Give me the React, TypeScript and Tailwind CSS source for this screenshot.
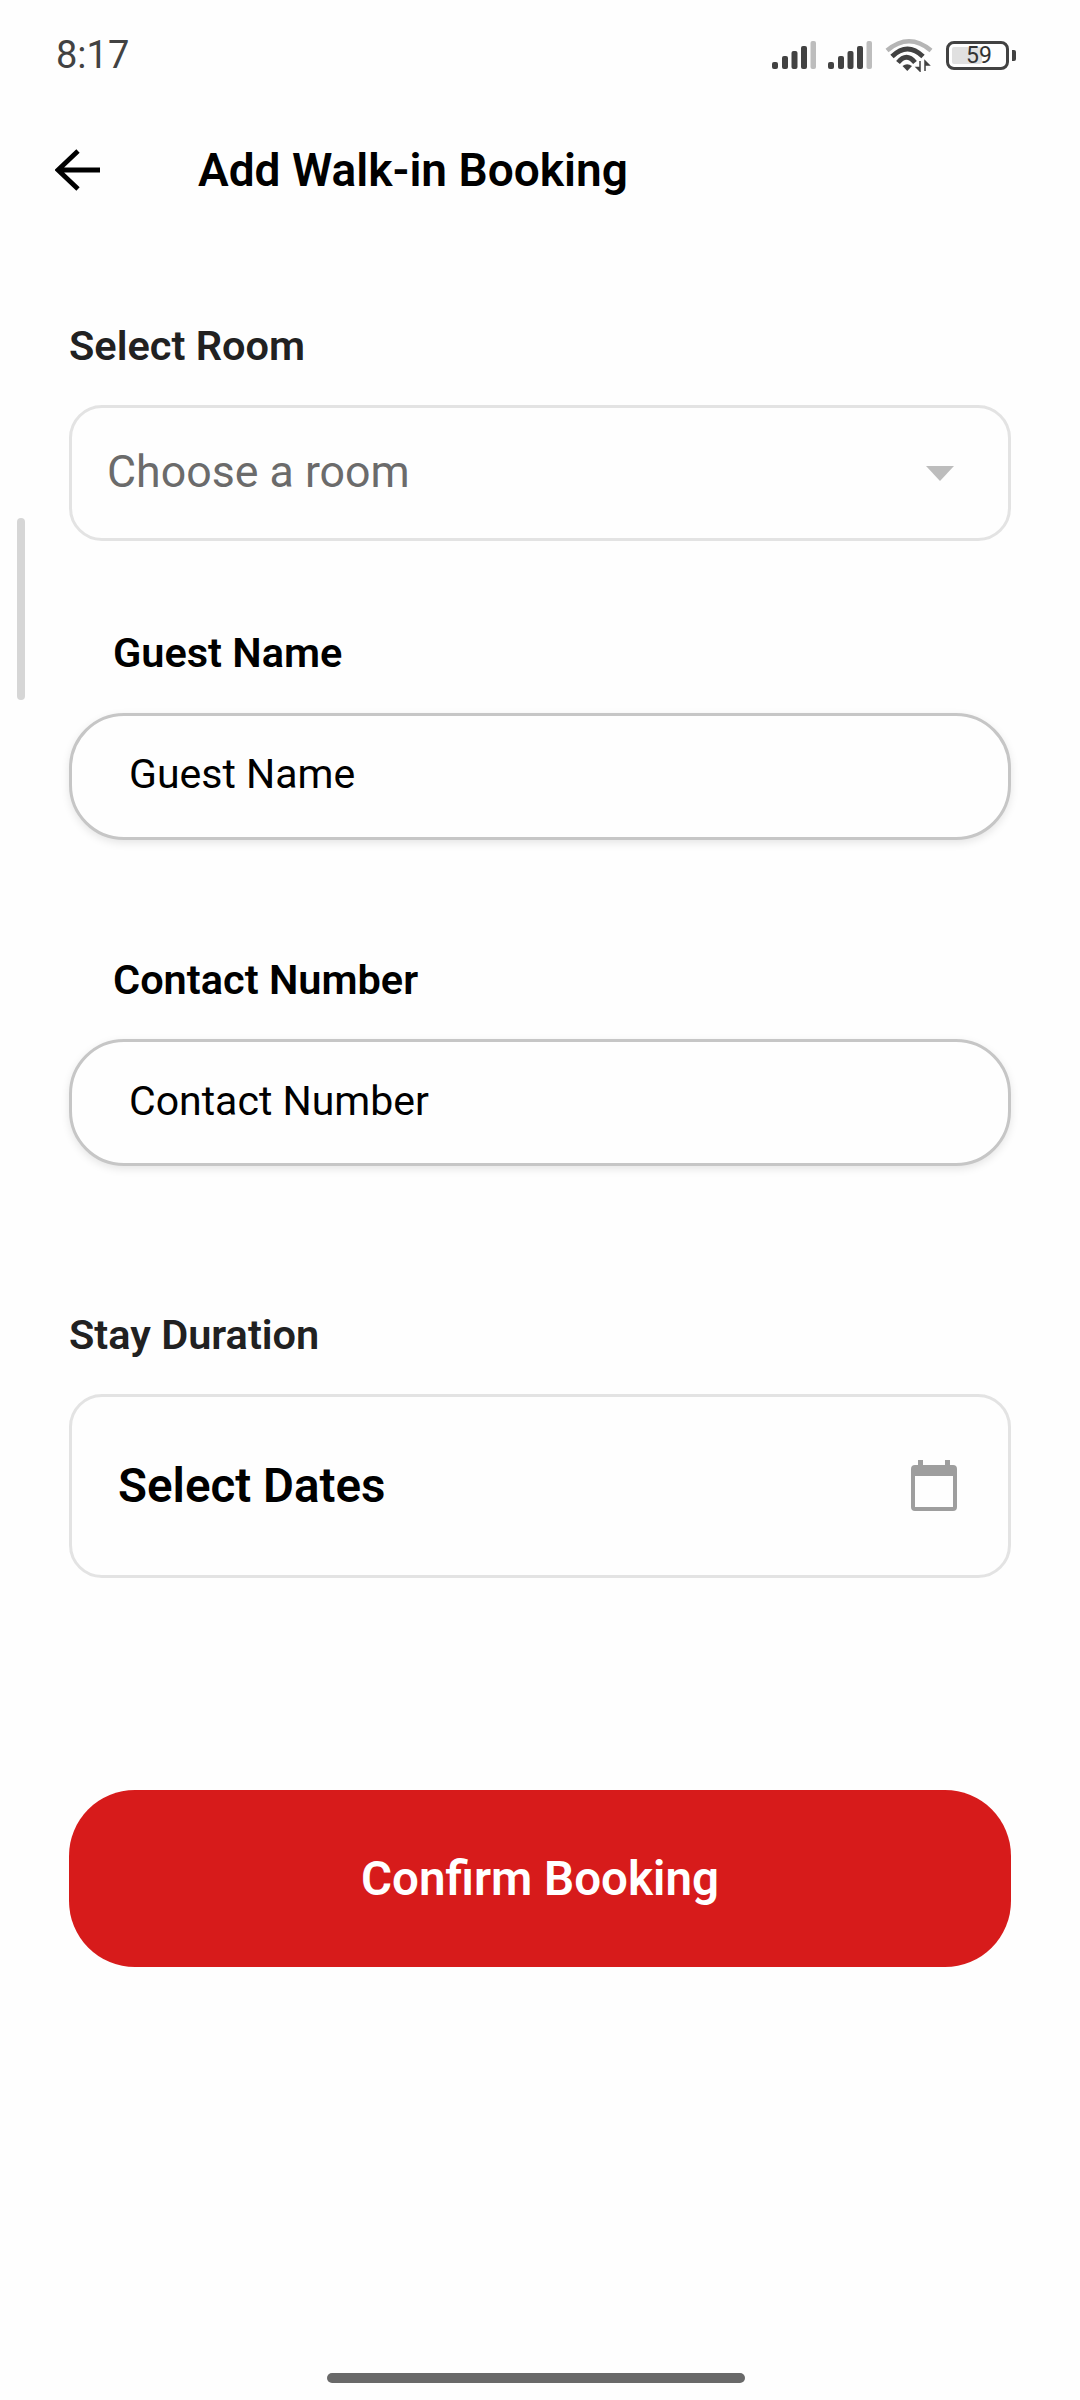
import React from "react";

function Signal() {
  return (
    <svg width="45" height="29" viewBox="0 0 45 29">
      <rect x="0" y="21" width="6" height="7" rx="2" fill="#424242" />
      <rect x="10" y="15" width="6" height="13" rx="2" fill="#424242" />
      <rect x="19.5" y="10" width="6" height="18" rx="2" fill="#424242" />
      <rect x="29" y="5" width="6" height="23" rx="2" fill="#424242" />
      <rect x="38.5" y="0" width="5.5" height="28" rx="2" fill="#bdbdbd" />
    </svg>
  );
}

function Wifi() {
  return (
    <svg width="48" height="34" viewBox="0 0 48 34" fill="none">
      <path d="M2 12.5 Q24 -6 46 12.5" stroke="#b5b5b5" strokeWidth="4.5" />
      <path d="M7 18.5 Q22.5 3.5 38 18.5" stroke="#424242" strokeWidth="4.8" />
      <path d="M13 24.5 Q21.5 14 30 24.5" stroke="#424242" strokeWidth="4.8" />
      <path d="M17.5 28 Q22 24.5 27 28 L22.3 33 Z" fill="#424242" />
      <path d="M35 23 V33 L31.5 29.5 H35 Z" stroke="#424242" strokeWidth="1.5" fill="#424242" />
      <path d="M40 33 V23 L44 27 H40 Z" stroke="#424242" strokeWidth="1.5" fill="#424242" />
    </svg>
  );
}

function Arrow() {
  return (
    <svg width="46" height="42" viewBox="0 0 46 42" fill="none">
      <path d="M45 21 H3 M23 2 L3 21 L23 40" stroke="#000000" strokeWidth="4.8" />
    </svg>
  );
}

function Calendar() {
  return (
    <svg width="46" height="52" viewBox="0 0 46 52" fill="none">
      <rect x="7" y="0" width="5" height="8" fill="#9e9e9e" />
      <rect x="34" y="0" width="5" height="8" fill="#9e9e9e" />
      <path
        fillRule="evenodd"
        clipRule="evenodd"
        d="M4 5 H42 A4 4 0 0 1 46 9 V47 A4 4 0 0 1 42 51 H4 A4 4 0 0 1 0 47 V9 A4 4 0 0 1 4 5 Z M4 16 V47 H42 V16 Z"
        fill="#9e9e9e"
      />
    </svg>
  );
}

export default function App() {
  return (
    <div className="relative w-[1080px] h-[2400px] overflow-hidden bg-[#fefefe] font-['Roboto',sans-serif]">
      <div className="flex h-[110px] items-center justify-between pl-[56px] pr-[64px]">
        <span className="text-[38px] leading-none text-[#424242]">8:17</span>
        <div className="flex items-center">
          <Signal />
          <div className="ml-[11px]">
            <Signal />
          </div>
          <div className="ml-[12px]">
            <Wifi />
          </div>
          <div className="ml-[13px] flex items-center">
            <div className="flex h-[29px] w-[63px] items-center rounded-[8px] border-[3px] border-[#424242] p-[3px]">
              <div className="relative h-full w-[59%] rounded-[2px] bg-[#e0e0e0]">
                <span className="absolute left-[14px] top-[-3px] text-[23px] leading-[23px] text-[#333333]">59</span>
              </div>
            </div>
            <div className="ml-[3px] h-[11px] w-[4px] rounded-r-[2px] bg-[#424242]" />
          </div>
        </div>
      </div>

      <div className="flex h-[120px] items-center pl-[55px]">
        <Arrow />
        <h1 className="ml-[97px] text-[46px] font-semibold leading-none text-black">Add Walk-in Booking</h1>
      </div>

      <div className="flex flex-col px-[69px]">
        <label className="mt-[93px] text-[41.5px] font-semibold leading-[46px] text-[#212121]">Select Room</label>
        <div className="mt-[36px] flex h-[136px] items-center justify-between rounded-[33px] border-[3px] border-[#e3e3e3] pl-[35px] pr-[54px]">
          <span className="relative top-[-1px] text-[44.7px] leading-none text-[#6b6b6b]">Choose a room</span>
          <svg width="28" height="15" viewBox="0 0 28 15">
            <path d="M0 0 H28 L14 15 Z" fill="#bdbdbd" />
          </svg>
        </div>

        <label className="ml-[44px] mt-[89px] text-[41.5px] font-semibold leading-[46px] text-black">Guest Name</label>
        <div className="mt-[37px] flex h-[127px] items-center rounded-[55px] border-[3px] border-[#c6c6c6] bg-[#fefefe] pb-[5px] pl-[57px] shadow-[0_3px_8px_rgba(0,0,0,0.1)]">
          <span className="text-[41px] leading-none text-black">Guest Name</span>
        </div>

        <label className="ml-[44px] mt-[117px] text-[41.5px] font-semibold leading-[46px] text-black">Contact Number</label>
        <div className="mt-[36px] flex h-[127px] items-center rounded-[55px] border-[3px] border-[#c6c6c6] bg-[#fefefe] pb-[2px] pl-[57px] shadow-[0_3px_8px_rgba(0,0,0,0.1)]">
          <span className="text-[41px] leading-none text-black">Contact Number</span>
        </div>

        <label className="mt-[146px] text-[41.5px] font-semibold leading-[46px] text-[#212121]">Stay Duration</label>
        <div className="mt-[36px] flex h-[184px] items-center justify-between rounded-[33px] border-[3px] border-[#e3e3e3] pl-[46px] pr-[51px]">
          <span className="relative top-[1px] text-[47.5px] font-semibold leading-none text-black">Select Dates</span>
          <Calendar />
        </div>

        <button className="mt-[212px] flex h-[177px] items-center justify-center rounded-[66px] bg-[#d71b1b] pt-[2px] text-[47.5px] font-semibold leading-none text-white">
          Confirm Booking
        </button>
      </div>

      <div className="absolute left-[17px] top-[518px] h-[182px] w-[8px] rounded-full bg-[#d6d6d6]" />
      <div className="absolute left-[327px] top-[2373px] h-[10px] w-[418px] rounded-full bg-[#696969]" />
    </div>
  );
}
